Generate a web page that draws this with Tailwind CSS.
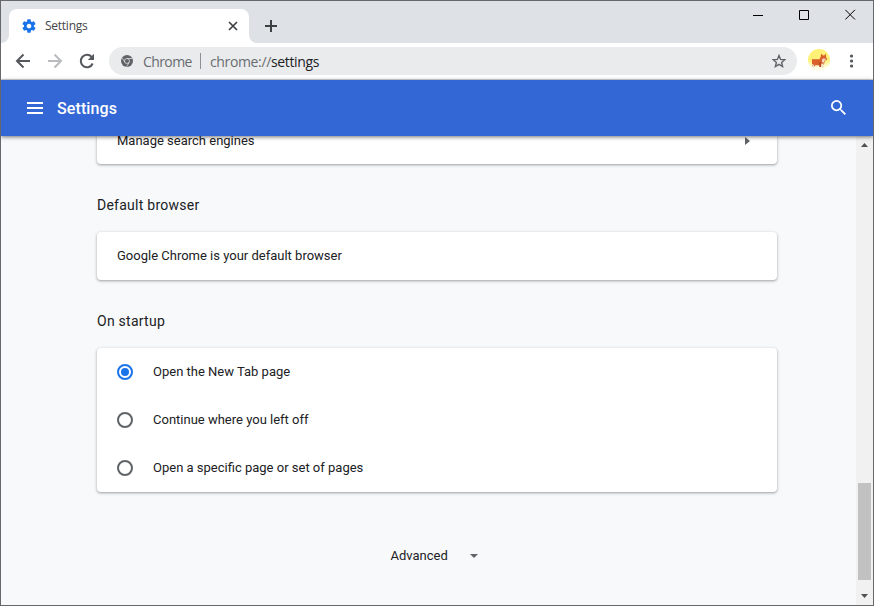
<!DOCTYPE html>
<html lang="en">
<head>
<meta charset="utf-8">
<title>Settings</title>
<script src="https://cdn.jsdelivr.net/npm/@tailwindcss/browser@4"></script>
</head>
<body class="overflow-hidden">
<div class="flex h-[606px] w-[874px] flex-col overflow-hidden border border-[#67686b] bg-[#f8f9fb] font-['Roboto',sans-serif] text-[13px] text-[#202124]">

  <!-- Tab strip -->
  <header class="flex h-[42px] shrink-0 items-end bg-[#dee1e6] font-['Open_Sans',sans-serif]">
    <svg class="h-2 w-2" viewBox="0 0 8 8"><path d="M8 0v8H0a8 8 0 0 0 8-8z" fill="#fff"/></svg>
    <div class="flex h-[34px] w-60 items-center rounded-t-lg bg-white pr-[11px] pl-3">
      <svg class="h-4 w-4" viewBox="0 0 24 24" fill="#1a73e8"><path d="M19.430 12.980c.04-.32.07-.64.07-.98s-.03-.66-.07-.98l2.110-1.650c.19-.15.24-.42.12-.64l-2-3.460c-.12-.22-.39-.3-.61-.22l-2.490 1c-.52-.4-1.080-.73-1.690-.98l-.38-2.650A.488.488 0 0 0 14 2h-4c-.25 0-.46.18-.49.42l-.38 2.650c-.61.25-1.170.59-1.690.98l-2.490-1c-.23-.09-.49 0-.61.22l-2 3.460c-.13.22-.07.49.12.64l2.110 1.650c-.04.32-.07.65-.07.98s.03.66.07.98l-2.110 1.650c-.19.15-.24.42-.12.64l2 3.460c.12.22.39.3.61.22l2.490-1c.52.4 1.080.73 1.690.98l.38 2.650c.03.24.24.42.49.42h4c.25 0 .46-.18.49-.42l.38-2.650c.61-.25 1.170-.59 1.690-.98l2.490 1c.23.09.49 0 .61-.22l2-3.460c.12-.22.07-.49-.12-.64l-2.110-1.650zM12 15.500c-1.930 0-3.500-1.570-3.500-3.500s1.570-3.500 3.500-3.500 3.500 1.570 3.500 3.500-1.570 3.500-3.500 3.500z"/></svg>
      <span class="ml-2 flex-1 text-[12px] tracking-[-0.25px] text-[#45474a]">Settings</span>
      <svg class="h-[10px] w-[10px]" viewBox="0 0 10 10" stroke="#3c4043" stroke-width="1.700"><path d="M1 1l8 8M9 1L1 9"/></svg>
    </div>
    <svg class="h-2 w-2" viewBox="0 0 8 8"><path d="M0 0v8h8a8 8 0 0 1-8-8z" fill="#fff"/></svg>
    <svg class="mb-[11px] ml-2 h-3 w-3" viewBox="0 0 12 12" stroke="#3c4043" stroke-width="2"><path d="M6 0v12M0 6h12"/></svg>
    <div class="mb-[23px] ml-auto flex items-center gap-[35px] pr-[17px]">
      <svg class="h-[11px] w-[11px]" viewBox="0 0 11 11"><path d="M0 6.500h10" stroke="#000"/></svg>
      <svg class="h-[11px] w-[11px]" viewBox="0 0 11 11" fill="none" stroke="#000"><path d="M.5 1.500h9v9h-9z"/></svg>
      <svg class="h-[11px] w-[11px]" viewBox="0 0 11 11" stroke="#000"><path d="M.3 .8l9.700 9.700M10 .8L.3 10.500"/></svg>
    </div>
  </header>

  <!-- Toolbar -->
  <nav class="flex h-[37px] shrink-0 items-center border-b border-[#d6d8db] bg-white font-['Open_Sans',sans-serif]">
    <svg class="ml-[14px] h-4 w-4" viewBox="0 0 16 16" fill="none" stroke="#55585c" stroke-width="2"><path d="M15 8H2.500M8.500 1.500L2 8l6.500 6.500"/></svg>
    <svg class="ml-4 h-4 w-4" viewBox="0 0 16 16" fill="none" stroke="#b9bbbe" stroke-width="2"><path d="M1 8h12.500M7.500 1.500L14 8l-6.500 6.500"/></svg>
    <svg class="ml-4 h-4 w-4" viewBox="0 0 16 16" fill="none" stroke="#55585c" stroke-width="2"><path d="M13.700 10.500A6.200 6.200 0 1 1 12.700 4l1 1"/><path d="M15 .8v6.200H8.800z" fill="#55585c" stroke="none"/></svg>
    <div class="ml-[14px] flex h-7 w-[688px] items-center rounded-full bg-[#e9ebed] pr-[11px] pl-3 text-[14px] text-[#696c70]">
      <svg class="h-3 w-3" viewBox="0 0 12 12"><circle cx="6" cy="6" r="6" fill="#5f6368"/><g fill="none" stroke="#e9ebed" stroke-width=".7"><circle cx="6" cy="6" r="2.500"/><path d="M6 3.500h5.400M3.830 7.250L1.200 2.700M8.170 7.250L5.500 11.800"/></g></svg>
      <span class="ml-[10px] w-[49px] whitespace-nowrap tracking-[-0.6px]">Chrome</span>
      <span class="ml-2 h-4 w-px bg-[#8d9094]"></span>
      <span class="ml-[9px] flex-1 tracking-[-0.36px]">chrome://<span class="text-[#202124]">settings</span></span>
      <svg class="h-[14px] w-[14px]" viewBox="0 0 14 14" fill="none" stroke="#5f6368" stroke-width="1.400"><path d="M7 1.500l1.600 3.900 4.200.3-3.200 2.700 1 4.100L7 10.300l-3.600 2.200 1-4.100L1.200 5.700l4.200-.3z"/></svg>
    </div>
    <svg class="-mt-[2px] ml-[11px] h-[22px] w-[22px]" viewBox="0 0 22 22"><defs><linearGradient id="sun" x2="0" y2="1"><stop offset=".5" stop-color="#fff176"/><stop offset=".85" stop-color="#fffde7"/></linearGradient></defs><circle cx="11" cy="11" r="11" fill="url(#sun)"/><path d="M4 10l1.500.3 6-.1 1.300-2.700.4-3 1.800 2 1.500-.2 1.300-1.800.3 3.700 1.200 2-2.500 1.800-.8 3.500-4.500 1-4-.5-1 1.500H4z" fill="#d95f2b"/><path d="M14.500 9.500l3.700.3-1.700 2-1 2.200-1.700-1.500zM12.500 15l3-.7v4.500h-1.700zM7.200 16.200h1.600V18H7.500zM4 15l2 .8v2.400H4.500z" fill="#f2dcc3"/><path d="M11.300 12.500l1.900 1-.2 4.500h-1.700z" fill="#b94723"/></svg>
    <svg class="ml-[19px] h-[14px] w-1" viewBox="0 0 4 14" fill="#55585c"><circle cx="2.500" cy="2" r="1.600"/><circle cx="2.500" cy="7" r="1.600"/><circle cx="2.500" cy="12" r="1.600"/></svg>
  </nav>

  <!-- Settings header -->
  <div class="z-10 flex h-14 shrink-0 items-center bg-[#3367d6] pr-[27px] pl-[26px] shadow-[0_1px_4px_rgba(0,0,0,0.55)]">
    <svg class="h-3 w-4" viewBox="0 0 16 12" fill="#fff"><path d="M0 0h16v2H0zM0 5h16v2H0zM0 10h16v2H0z"/></svg>
    <h1 class="mt-[2px] ml-[14px] flex-1 text-[16px] font-medium tracking-[0.1px] text-white">Settings</h1>
    <svg class="mb-px h-[15px] w-[15px]" viewBox="3 3 17.500 17.500" fill="#fff"><path d="M15.500 14h-.79l-.28-.27A6.470 6.470 0 0 0 16 9.500 6.500 6.500 0 1 0 9.500 16c1.610 0 3.090-.59 4.230-1.570l.27.28v.79l5 4.990L20.490 19l-4.990-5zm-6 0C7.010 14 5 11.990 5 9.500S7.010 5 9.500 5 14 7.010 14 9.500 11.990 14 9.500 14z"/></svg>
  </div>

  <!-- Page -->
  <div class="flex min-h-0 flex-1">
    <main class="flex-1 pl-24">
      <section class="flex h-7 w-[680px] items-start justify-between rounded-b bg-white pr-[27px] pl-5 shadow-[0_1px_2px_rgba(60,64,67,0.3),0_1px_3px_1px_rgba(60,64,67,0.15)]">
        <span class="-mt-[5px] leading-5">Manage search engines</span>
        <svg class="mt-px h-2 w-[5px]" viewBox="0 0 5 8" fill="#5f6368"><path d="M0 0l5 4-5 4z"/></svg>
      </section>
      <h2 class="mt-[31px] text-[14px] leading-5 tracking-[0.25px]">Default browser</h2>
      <section class="mt-[17px] flex h-12 w-[680px] items-center rounded bg-white px-5 shadow-[0_1px_2px_rgba(60,64,67,0.3),0_1px_3px_1px_rgba(60,64,67,0.15)]">Google Chrome is your default browser</section>
      <h2 class="mt-[31px] text-[14px] leading-5 tracking-[0.25px]">On startup</h2>
      <section class="mt-[17px] w-[680px] rounded bg-white px-5 shadow-[0_1px_2px_rgba(60,64,67,0.3),0_1px_3px_1px_rgba(60,64,67,0.15)]">
        <div class="flex h-12 items-center gap-5"><span class="flex size-4 items-center justify-center rounded-full border-2 border-[#1a73e8]"><span class="size-2 rounded-full bg-[#1a73e8]"></span></span>Open the New Tab page</div>
        <div class="flex h-12 items-center gap-5"><span class="size-4 rounded-full border-2 border-[#5f6368]"></span>Continue where you left off</div>
        <div class="flex h-12 items-center gap-5"><span class="size-4 rounded-full border-2 border-[#5f6368]"></span>Open a specific page or set of pages</div>
      </section>
      <div class="mt-[54px] flex w-[680px] items-center pl-[293.5px] leading-5">
        <span class="w-[79.5px]">Advanced</span>
        <svg class="h-1 w-2" viewBox="0 0 8 4" fill="#5f6368"><path d="M0 0h8L4 4z"/></svg>
      </div>
    </main>
    <aside class="flex w-[17px] flex-col items-center bg-[#f1f1f1]">
      <svg class="mt-[7px] h-1 w-[7px]" viewBox="0 0 7 4" fill="#505050"><path d="M3.500 0L7 4H0z"/></svg>
      <div class="mt-auto h-[97px] w-[13px] bg-[#c1c1c1]"></div>
      <svg class="mt-[14px] mb-[7px] h-1 w-[7px]" viewBox="0 0 7 4" fill="#505050"><path d="M0 0h7L3.500 4z"/></svg>
    </aside>
  </div>
</div>
</body>
</html>
